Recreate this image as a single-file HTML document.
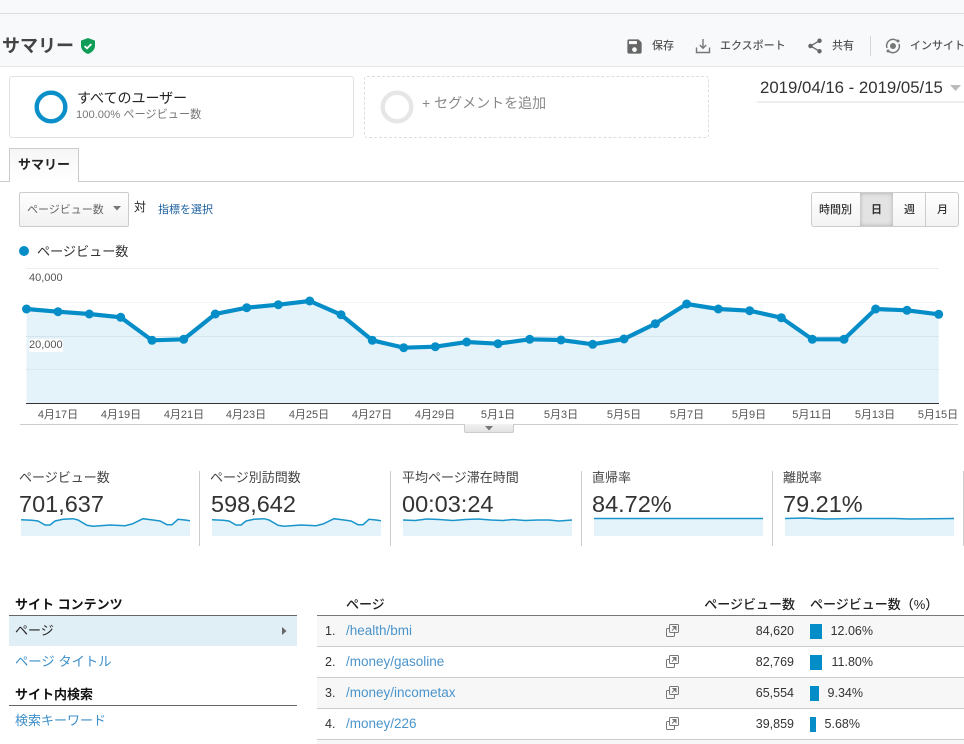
<!DOCTYPE html>
<html lang="ja"><head><meta charset="utf-8"><title>サマリー</title>
<style>
html,body{margin:0;padding:0;background:#fff}
body{width:964px;height:744px;overflow:hidden;position:relative;font-family:"Liberation Sans","Noto Sans CJK JP",sans-serif;color:#333}
.b{position:absolute;box-sizing:border-box}
.t{position:absolute;white-space:nowrap;line-height:20px;height:20px}
.r{text-align:right}
.c{text-align:center}
svg{position:absolute;overflow:hidden}
.lnk{color:#3d8fc9}
.lab{font-size:13px;color:#444}
.val{font-size:23.5px;color:#333}
.hd{font-size:13px;font-weight:bold;color:#111}
.num{font-size:12.5px;color:#333}
.rk{font-size:12.5px;color:#333}
.path{font-size:13.5px;color:#4a94cc}
.act{font-size:11px;color:#555;font-weight:500}
.div{position:absolute;width:1px;top:471px;height:75px;background:#ccc}
</style></head><body>

<div class="b" style="left:0;top:0;width:964px;height:67px;background:#f8f9fa;border-bottom:1px solid #e3e4e6"></div>
<div class="b" style="left:0;top:13px;width:964px;height:1px;background:#dcdee0"></div>
<div class="t" style="left:2px;top:36px;font-size:18px;font-weight:bold;color:#444">サマリー</div>
<svg style="left:80px;top:37px" width="16" height="18" viewBox="0 0 16 18"><path d="M8 1l7 2.6v5c0 4-3 7-7 8.4-4-1.400-7-4.400-7-8.400v-5z" fill="#0f9d58"/><path d="M4.600 9l2.400 2.400 4.400-4.400" fill="none" stroke="#fff" stroke-width="1.800"/></svg>

<svg style="left:625px;top:37px" width="19" height="19" viewBox="0 0 24 24"><path fill="#666" d="M17 3H5c-1.110 0-2 .9-2 2v14c0 1.100.89 2 2 2h14c1.100 0 2-.9 2-2V7l-4-4zm-5 16c-1.660 0-3-1.340-3-3s1.340-3 3-3 3 1.340 3 3-1.340 3-3 3zm3-10H5V5h10v4z"/></svg>
<div class="t act" style="left:652px;top:36px">保存</div>
<svg style="left:695px;top:38px" width="16" height="16" viewBox="0 0 16 16"><path d="M1.500 9.500v5h13v-5M8 1v9M4.800 7l3.200 3.200L11.200 7" fill="none" stroke="#777" stroke-width="1.400"/></svg>
<div class="t act" style="left:720px;top:36px">エクスポート</div>
<svg style="left:806px;top:37px" width="18" height="18" viewBox="0 0 24 24"><path fill="#666" d="M18 16.080c-.76 0-1.440.3-1.960.77L8.910 12.700c.05-.23.09-.46.09-.7s-.04-.47-.09-.7l7.050-4.110c.54.5 1.250.81 2.040.81 1.660 0 3-1.340 3-3s-1.340-3-3-3-3 1.340-3 3c0 .24.04.47.09.7L8.040 9.810C7.500 9.310 6.790 9 6 9c-1.660 0-3 1.340-3 3s1.340 3 3 3c.79 0 1.500-.31 2.040-.81l7.120 4.160c-.05.21-.08.43-.08.65 0 1.610 1.310 2.920 2.920 2.920s2.920-1.310 2.920-2.920-1.310-2.920-2.920-2.920z"/></svg>
<div class="t act" style="left:832px;top:36px">共有</div>
<div class="b" style="left:870px;top:36px;width:1px;height:20px;background:#d5d5d5"></div>
<svg style="left:885px;top:38px" width="16" height="16" viewBox="0 0 16 16"><circle cx="8" cy="8" r="3" fill="#777"/><path d="M2 10A6.500 6.500 0 0 1 12.500 3M14 6A6.500 6.500 0 0 1 3.500 13" fill="none" stroke="#777" stroke-width="1.500"/><circle cx="13" cy="3" r="1.500" fill="#777"/><circle cx="3" cy="13" r="1.500" fill="#777"/></svg>
<div class="t act" style="left:910px;top:36px">インサイト</div>

<div class="b" style="left:9px;top:76px;width:345px;height:62px;border:1px solid #e2e2e2;border-radius:3px;background:#fff"></div>
<svg style="left:30px;top:86px" width="42" height="42"><circle cx="21" cy="21" r="14.300" fill="none" stroke="#0a8fc8" stroke-width="4.400"/></svg>
<div class="t" style="left:77px;top:88px;font-size:14px;color:#222">すべてのユーザー</div>
<div class="t" style="left:76px;top:105px;font-size:11.200px;color:#777">100.00% ページビュー数</div>

<div class="b" style="left:364px;top:76px;width:345px;height:62px;border:1px dashed #ddd;border-radius:3px"></div>
<svg style="left:376px;top:86px" width="42" height="42"><circle cx="21" cy="21" r="14.300" fill="none" stroke="#e6e6e6" stroke-width="4.400"/></svg>
<div class="t" style="left:422px;top:93px;font-size:14px;color:#888">+ セグメントを追加</div>

<div class="t" style="left:760px;top:78px;font-size:16.800px;color:#333">2019/04/16 - 2019/05/15</div>
<svg style="left:949px;top:84px" width="13" height="8"><path d="M1 1h11l-5.500 6z" fill="#bbb"/></svg>
<div class="b" style="left:757px;top:101px;width:207px;height:2px;background:#eee"></div>

<div class="b" style="left:0;top:181px;width:964px;height:1px;background:#ccc"></div>
<div class="b" style="left:9px;top:148px;width:70px;height:34px;border:1px solid #ccc;border-bottom:none;background:linear-gradient(#f6f6f6,#fff)"></div>
<div class="t" style="left:18px;top:155px;font-size:13px;font-weight:bold;color:#222">サマリー</div>

<div class="b" style="left:19px;top:192px;width:110px;height:35px;border:1px solid #ccc;border-radius:2px;background:linear-gradient(#fff,#f1f1f1)"></div>
<div class="t" style="left:27px;top:200px;font-size:11px;color:#666">ページビュー数</div>
<svg style="left:113px;top:206px" width="9" height="5"><path d="M0 0h8l-4 4.500z" fill="#777"/></svg>
<div class="t" style="left:134px;top:197px;font-size:12px;color:#222">対</div>
<div class="t" style="left:158px;top:200px;font-size:11px;color:#1a5f9e">指標を選択</div>

<div class="b" style="left:811px;top:192px;width:148px;height:35px;border:1px solid #ccc;border-radius:3px;background:linear-gradient(#fff,#f3f3f3)"></div>
<div class="b" style="left:860px;top:193px;width:33px;height:33px;background:#e3e3e3;box-shadow:inset 0 0 4px #aaa"></div>
<div class="b" style="left:925px;top:193px;width:1px;height:33px;background:#ccc"></div>
<div class="t c" style="left:811px;width:49px;top:200px;font-size:11px;font-weight:500;color:#333">時間別</div>
<div class="t c" style="left:860px;width:33px;top:200px;font-size:11px;font-weight:bold;color:#333">日</div>
<div class="t c" style="left:893px;width:33px;top:200px;font-size:11px;font-weight:500;color:#333">週</div>
<div class="t c" style="left:926px;width:33px;top:200px;font-size:11px;font-weight:500;color:#333">月</div>

<svg style="left:18px;top:245px" width="12" height="12"><circle cx="6" cy="6" r="5" fill="#058dc7"/></svg>
<div class="t" style="left:37px;top:242px;font-size:13.100px;color:#333">ページビュー数</div>

<svg style="left:0;top:260px" width="964" height="170" viewBox="0 260 964 170">
<path d="M26.500 309 58 311.700 89.300 314 120.700 317.300 152 340.300 183.700 339.300 215.300 314 246.700 307.700 278.300 304.700 309.700 301 341 314.700 372.300 340.300 403.700 347.700 435.300 346.700 466.700 342 498 343.700 529.700 339.300 561 340 592.700 344.300 624 339 655.300 323.700 686.700 304 718.300 309 749.700 310.700 781.300 317.700 812.300 339.300 844 339.300 875.700 309 907 310.300 938.700 314.300V403H26.500z" fill="#e4f2f9"/>
<path d="M26 268.500H939" stroke="#eee"/><path d="M26 302.500H939" stroke="#f6f6f6"/>
<path d="M26 336.500H939" stroke="#d5e3ea"/><path d="M26 369.500H939" stroke="#dde9ef"/>
<path d="M26 403.500H939" stroke="#333"/>
<path d="M26.500 309 58 311.700 89.300 314 120.700 317.300 152 340.300 183.700 339.300 215.300 314 246.700 307.700 278.300 304.700 309.700 301 341 314.700 372.300 340.300 403.700 347.700 435.300 346.700 466.700 342 498 343.700 529.700 339.300 561 340 592.700 344.300 624 339 655.300 323.700 686.700 304 718.300 309 749.700 310.700 781.300 317.700 812.300 339.300 844 339.300 875.700 309 907 310.300 938.700 314.300" fill="none" stroke="#058dc7" stroke-width="4.200"/>
<g fill="#058dc7">
<circle cx="26.500" cy="309" r="4.500"/><circle cx="58" cy="311.700" r="4.500"/><circle cx="89.300" cy="314" r="4.500"/><circle cx="120.700" cy="317.300" r="4.500"/><circle cx="152" cy="340.300" r="4.500"/><circle cx="183.700" cy="339.300" r="4.500"/><circle cx="215.300" cy="314" r="4.500"/><circle cx="246.700" cy="307.700" r="4.500"/><circle cx="278.300" cy="304.700" r="4.500"/><circle cx="309.700" cy="301" r="4.500"/><circle cx="341" cy="314.700" r="4.500"/><circle cx="372.300" cy="340.300" r="4.500"/><circle cx="403.700" cy="347.700" r="4.500"/><circle cx="435.300" cy="346.700" r="4.500"/><circle cx="466.700" cy="342" r="4.500"/><circle cx="498" cy="343.700" r="4.500"/><circle cx="529.700" cy="339.300" r="4.500"/><circle cx="561" cy="340" r="4.500"/><circle cx="592.700" cy="344.300" r="4.500"/><circle cx="624" cy="339" r="4.500"/><circle cx="655.300" cy="323.700" r="4.500"/><circle cx="686.700" cy="304" r="4.500"/><circle cx="718.300" cy="309" r="4.500"/><circle cx="749.700" cy="310.700" r="4.500"/><circle cx="781.300" cy="317.700" r="4.500"/><circle cx="812.300" cy="339.300" r="4.500"/><circle cx="844" cy="339.300" r="4.500"/><circle cx="875.700" cy="309" r="4.500"/><circle cx="907" cy="310.300" r="4.500"/><circle cx="938.700" cy="314.300" r="4.500"/>
</g>
<path d="M20 424.500H958" stroke="#ccc"/>
</svg>
<div class="t" style="left:29px;top:268px;font-size:11px;color:#555">40,000</div>
<div class="t" style="left:29px;top:335px;font-size:11px;color:#555;height:14px;line-height:20px"><span style="background:#fff;display:inline-block;line-height:13px">20,000</span></div>

<div class="t c" style="left:28px;width:60px;top:405px;font-size:11px;color:#555">4月17日</div>
<div class="t c" style="left:91px;width:60px;top:405px;font-size:11px;color:#555">4月19日</div>
<div class="t c" style="left:154px;width:60px;top:405px;font-size:11px;color:#555">4月21日</div>
<div class="t c" style="left:216px;width:60px;top:405px;font-size:11px;color:#555">4月23日</div>
<div class="t c" style="left:279px;width:60px;top:405px;font-size:11px;color:#555">4月25日</div>
<div class="t c" style="left:342px;width:60px;top:405px;font-size:11px;color:#555">4月27日</div>
<div class="t c" style="left:405px;width:60px;top:405px;font-size:11px;color:#555">4月29日</div>
<div class="t c" style="left:468px;width:60px;top:405px;font-size:11px;color:#555">5月1日</div>
<div class="t c" style="left:531px;width:60px;top:405px;font-size:11px;color:#555">5月3日</div>
<div class="t c" style="left:594px;width:60px;top:405px;font-size:11px;color:#555">5月5日</div>
<div class="t c" style="left:657px;width:60px;top:405px;font-size:11px;color:#555">5月7日</div>
<div class="t c" style="left:719px;width:60px;top:405px;font-size:11px;color:#555">5月9日</div>
<div class="t c" style="left:782px;width:60px;top:405px;font-size:11px;color:#555">5月11日</div>
<div class="t c" style="left:845px;width:60px;top:405px;font-size:11px;color:#555">5月13日</div>
<div class="t c" style="left:908px;width:60px;top:405px;font-size:11px;color:#555">5月15日</div>

<div class="b" style="left:464px;top:424px;width:50px;height:9px;background:linear-gradient(#f2f2f2,#e2e2e2);border:1px solid #ccc;border-top:none;border-radius:0 0 2px 2px"></div>
<svg style="left:484px;top:426px" width="10" height="5"><path d="M1 0h8l-4 4.500z" fill="#777"/></svg>

<div class="t lab" style="left:19px;top:468px">ページビュー数</div>
<div class="t val" style="left:19px;top:494px">701,637</div>
<div class="div" style="left:199px"></div>
<div class="t lab" style="left:210px;top:468px">ページ別訪問数</div>
<div class="t val" style="left:211px;top:494px">598,642</div>
<div class="div" style="left:390px"></div>
<div class="t lab" style="left:402px;top:468px">平均ページ滞在時間</div>
<div class="t val" style="left:402px;top:494px">00:03:24</div>
<div class="div" style="left:581px"></div>
<div class="t lab" style="left:592px;top:468px">直帰率</div>
<div class="t val" style="left:592px;top:494px">84.72%</div>
<div class="div" style="left:772px"></div>
<div class="t lab" style="left:783px;top:468px">離脱率</div>
<div class="t val" style="left:783px;top:494px">79.21%</div>
<div class="div" style="left:963px"></div>

<svg style="left:21px;top:515px" width="169" height="22" viewBox="21 515 169 22"><path d="M21 519.700 32 520.300 38 521 45 525 50 525 55 521 63 519.300 73 518.700 78 520 87 525.300 93 526.300 110 525 125 525.700 132 524 143 518.700 153 520 160 521 167 524.700 172 524.700 178 519.300 185 520 190 520.700V536H21z" fill="#e4f2f9"/><path d="M21 519.700 32 520.300 38 521 45 525 50 525 55 521 63 519.300 73 518.700 78 520 87 525.300 93 526.300 110 525 125 525.700 132 524 143 518.700 153 520 160 521 167 524.700 172 524.700 178 519.300 185 520 190 520.700" fill="none" stroke="#1a95cc" stroke-width="1.500"/></svg>
<svg style="left:212px;top:515px" width="169" height="22" viewBox="21 515 169 22"><path d="M21 519.700 32 520.300 38 521 45 525 50 525 55 521 63 519.300 73 518.700 78 520 87 525.300 93 526.300 110 525 125 525.700 132 524 143 518.700 153 520 160 521 167 524.700 172 524.700 178 519.300 185 520 190 520.700V536H21z" fill="#e4f2f9"/><path d="M21 519.700 32 520.300 38 521 45 525 50 525 55 521 63 519.300 73 518.700 78 520 87 525.300 93 526.300 110 525 125 525.700 132 524 143 518.700 153 520 160 521 167 524.700 172 524.700 178 519.300 185 520 190 520.700" fill="none" stroke="#1a95cc" stroke-width="1.500"/></svg>
<svg style="left:403px;top:515px" width="169" height="22" viewBox="0 0 169 22"><path d="M0 5 12 5.500 24 4 36 4.500 50 5.500 62 4.500 75 4 88 5 100 5.500 110 4.500 122 5.500 135 5 146 5 156 6 169 5V21H0z" fill="#e4f2f9"/><path d="M0 5 12 5.500 24 4 36 4.500 50 5.500 62 4.500 75 4 88 5 100 5.500 110 4.500 122 5.500 135 5 146 5 156 6 169 5" fill="none" stroke="#1a95cc" stroke-width="1.500"/></svg>
<svg style="left:594px;top:515px" width="169" height="22" viewBox="0 0 169 22"><path d="M0 3.500H169V21H0z" fill="#e4f2f9"/><path d="M0 3.500H169" fill="none" stroke="#1a95cc" stroke-width="1.500"/></svg>
<svg style="left:785px;top:515px" width="169" height="22" viewBox="0 0 169 22"><path d="M0 3.500 20 3 40 4 70 3.500 110 3.500 125 4 169 3.500V21H0z" fill="#e4f2f9"/><path d="M0 3.500 20 3 40 4 70 3.500 110 3.500 125 4 169 3.500" fill="none" stroke="#1a95cc" stroke-width="1.500"/></svg>

<div class="t hd" style="left:15px;top:595px">サイト コンテンツ</div>
<div class="b" style="left:9px;top:615px;width:288px;height:1px;background:#666"></div>
<div class="b" style="left:9px;top:616px;width:288px;height:30px;background:#e0eef5"></div>
<div class="t" style="left:15px;top:621px;font-size:13px;color:#222">ページ</div>
<svg style="left:282px;top:627px" width="5" height="8"><path d="M0 0l4.500 4L0 8z" fill="#666"/></svg>
<div class="t lnk" style="left:15px;top:652px;font-size:13.300px">ページ タイトル</div>
<div class="t hd" style="left:15px;top:685px">サイト内検索</div>
<div class="b" style="left:9px;top:705px;width:288px;height:1px;background:#666"></div>
<div class="t lnk" style="left:15px;top:711px;font-size:13px">検索キーワード</div>

<div class="t" style="left:346px;top:595px;font-size:13px;font-weight:500;color:#222">ページ</div>
<div class="t r" style="left:650px;width:145px;top:595px;font-size:13px;font-weight:500;color:#222">ページビュー数</div>
<div class="t" style="left:810px;top:595px;font-size:13px;font-weight:500;color:#222">ページビュー数（%）</div>
<div class="b" style="left:317px;top:615px;width:647px;height:1px;background:#777"></div>
<div class="b" style="left:317px;top:616px;width:647px;height:31px;background:#f7f7f7;border-bottom:1px solid #ccc"></div>
<div class="b" style="left:317px;top:647px;width:647px;height:31px;background:#fff;border-bottom:1px solid #ccc"></div>
<div class="b" style="left:317px;top:678px;width:647px;height:31px;background:#f7f7f7;border-bottom:1px solid #ccc"></div>
<div class="b" style="left:317px;top:709px;width:647px;height:31px;background:#fff;border-bottom:1px solid #ccc"></div>
<div class="b" style="left:317px;top:740px;width:647px;height:4px;background:#f7f7f7"></div>

<div class="t rk" style="left:325px;top:621px">1.</div>
<div class="t path" style="left:346px;top:621px">/health/bmi</div>
<div class="t rk" style="left:325px;top:652px">2.</div>
<div class="t path" style="left:346px;top:652px">/money/gasoline</div>
<div class="t rk" style="left:325px;top:683px">3.</div>
<div class="t path" style="left:346px;top:683px">/money/incometax</div>
<div class="t rk" style="left:325px;top:714px">4.</div>
<div class="t path" style="left:346px;top:714px">/money/226</div>

<svg style="left:666px;top:624px" width="13" height="13" viewBox="0 0 13 13"><path d="M3.500 1.500a1 1 0 0 1 1-1h7a1 1 0 0 1 1 1v6a1 1 0 0 1-1 1h-7a1 1 0 0 1-1-1zM3.500 4.500h-2a1 1 0 0 0-1 1v6a1 1 0 0 0 1 1h6a1 1 0 0 0 1-1v-3" fill="none" stroke="#777"/><path d="M6 6.500 9.500 3M7 2.500h3v3z" fill="#777" stroke="#777"/></svg>
<svg style="left:666px;top:655px" width="13" height="13" viewBox="0 0 13 13"><path d="M3.500 1.500a1 1 0 0 1 1-1h7a1 1 0 0 1 1 1v6a1 1 0 0 1-1 1h-7a1 1 0 0 1-1-1zM3.500 4.500h-2a1 1 0 0 0-1 1v6a1 1 0 0 0 1 1h6a1 1 0 0 0 1-1v-3" fill="none" stroke="#777"/><path d="M6 6.500 9.500 3M7 2.500h3v3z" fill="#777" stroke="#777"/></svg>
<svg style="left:666px;top:686px" width="13" height="13" viewBox="0 0 13 13"><path d="M3.500 1.500a1 1 0 0 1 1-1h7a1 1 0 0 1 1 1v6a1 1 0 0 1-1 1h-7a1 1 0 0 1-1-1zM3.500 4.500h-2a1 1 0 0 0-1 1v6a1 1 0 0 0 1 1h6a1 1 0 0 0 1-1v-3" fill="none" stroke="#777"/><path d="M6 6.500 9.500 3M7 2.500h3v3z" fill="#777" stroke="#777"/></svg>
<svg style="left:666px;top:717px" width="13" height="13" viewBox="0 0 13 13"><path d="M3.500 1.500a1 1 0 0 1 1-1h7a1 1 0 0 1 1 1v6a1 1 0 0 1-1 1h-7a1 1 0 0 1-1-1zM3.500 4.500h-2a1 1 0 0 0-1 1v6a1 1 0 0 0 1 1h6a1 1 0 0 0 1-1v-3" fill="none" stroke="#777"/><path d="M6 6.500 9.500 3M7 2.500h3v3z" fill="#777" stroke="#777"/></svg>

<div class="t r num" style="left:714px;width:80px;top:621px">84,620</div>
<div class="t r num" style="left:714px;width:80px;top:652px">82,769</div>
<div class="t r num" style="left:714px;width:80px;top:683px">65,554</div>
<div class="t r num" style="left:714px;width:80px;top:714px">39,859</div>

<div class="b" style="left:810px;top:624px;width:12px;height:15px;background:#058dc7"></div>
<div class="b" style="left:810px;top:655px;width:12px;height:15px;background:#058dc7"></div>
<div class="b" style="left:810px;top:686px;width:9px;height:15px;background:#058dc7"></div>
<div class="b" style="left:810px;top:717px;width:6px;height:15px;background:#058dc7"></div>
<div class="t r num" style="left:800px;width:73px;top:621px">12.06%</div>
<div class="t r num" style="left:800px;width:73px;top:652px">11.80%</div>
<div class="t r num" style="left:790px;width:73px;top:683px">9.34%</div>
<div class="t r num" style="left:787px;width:73px;top:714px">5.68%</div>

</body></html>
